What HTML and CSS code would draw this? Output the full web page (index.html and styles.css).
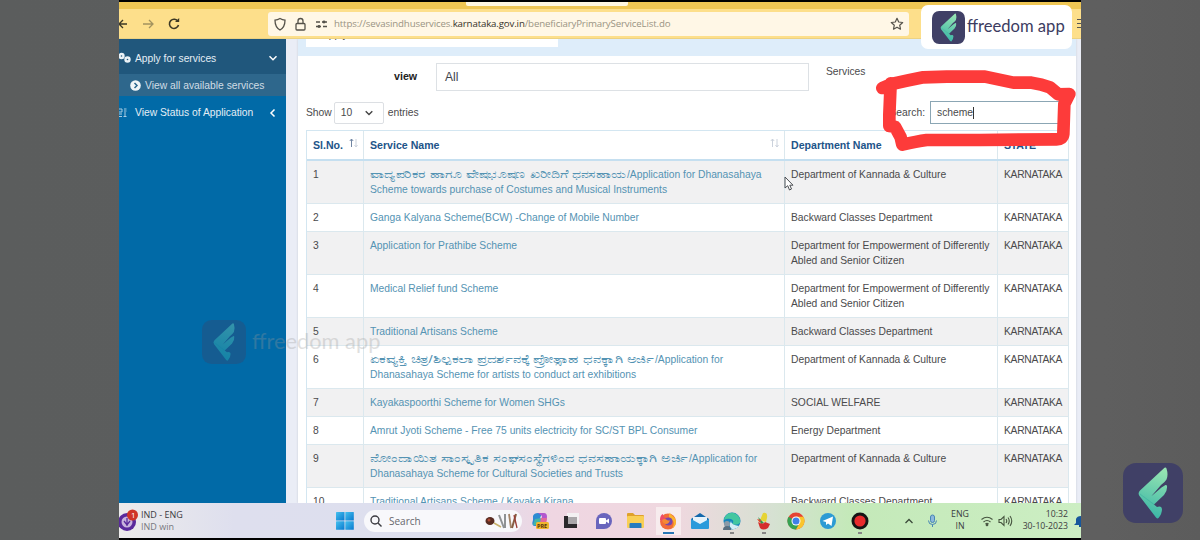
FILE: index.html
```html
<!DOCTYPE html>
<html lang="en">
<head>
<meta charset="utf-8">
<title>Seva Sindhu services</title>
<link rel="stylesheet" href="styles.css">
</head>
<body>
<svg width="0" height="0" class="defs">
  <defs>
    <linearGradient id="wing" x1="0.6" y1="0" x2="0.4" y2="1"><stop offset="0" stop-color="#96e4b2"/><stop offset="1" stop-color="#38b5a6"/></linearGradient>
    <linearGradient id="winblue" x1="0" y1="0" x2="1" y2="1"><stop offset="0" stop-color="#45c1ef"/><stop offset="1" stop-color="#0879cf"/></linearGradient>
    <symbol id="logo" viewBox="0 0 60 60">
      <rect width="60" height="60" rx="13" fill="#404066"/>
      <path fill="url(#wing)" d="M41.500 4.800Q43 4 43.500 5.500Q45.500 12 43.500 16.500Q42 19 38 22L28.300 33.300L38.500 24.500L42.500 22Q43.700 21.700 44 23Q44.500 28 41 32L31 41.500L34 44Q38.500 42.500 39 46Q39 51 35.500 55Q34.500 56 33 54.500L16.500 33Q14.500 30 17 27.500Z"/>
      <path d="M17 31l14 10.500" stroke="#2da49c" stroke-width=".8" opacity=".5"/>
    </symbol>
  </defs>
</svg>
<div class="stage">
  <div class="tabstrip"><i class="active-tab"></i></div>
  <div class="toolbar">
    <svg class="nav-icons" width="70" height="29" viewBox="0 0 70 29" fill="none" stroke="#3c3825" stroke-width="1.3">
      <path d="M0 15h8M4 11l-4 4 4 4"/>
      <path stroke="#a3935f" d="M24 15h10M30 11l4 4-4 4"/>
      <path stroke-width="1.6" d="M59 12.500a4.600 4.600 0 1 0 .5 3.500"/><path d="M56 13h4.200V9z" fill="#3c3825" stroke="none"/>
    </svg>
    <div class="address">
      <svg width="66" height="22" viewBox="0 0 66 22" fill="none" stroke="#55524a" stroke-width="1.300">
        <path d="M12 5.500c2 1.200 3 1.500 5 1.700 0 5-1.500 7.800-5 9.800-3.500-2-5-4.800-5-9.800 2-.2 3-.5 5-1.700z"/>
        <rect x="28" y="10.500" width="9" height="6.500" rx="1"/><path d="M30 10.500V8a2.500 2.500 0 0 1 5 0v2.500"/>
        <path d="M48 9h4M54 9h5M48 13.500h5M55 13.500h4"/><circle cx="56" cy="9" r=".8"/><circle cx="51" cy="13.500" r=".8"/>
      </svg>
      <span class="url">https://sevasindhuservices.<b>karnataka.gov.in</b>/beneficiaryPrimaryServiceList.do</span>
      <svg class="star" width="14" height="14" viewBox="0 0 14 14" fill="none" stroke="#55524a" stroke-width="1.200"><path d="M7 1.300l1.700 3.700 4 .5-3 2.700.8 4L7 10.200l-3.500 2 .8-4-3-2.700 4-.5z" stroke-linejoin="round"/></svg>
    </div>
    <i class="burger"></i>
  </div>

  <div class="page">
    <nav class="sidebar">
      <div class="item open">
        <svg width="14" height="12" viewBox="0 0 14 12" fill="none" stroke="#eaf2f7"><circle cx="2.500" cy="4" r="2" stroke-width="2.400"/><circle cx="8.500" cy="7.500" r="2" stroke-width="2.400"/></svg>
        <span class="t-apply">Apply for services</span>
        <svg class="chev" width="8" height="8" viewBox="0 0 8 8" fill="none" stroke="#fff" stroke-width="1.500"><path d="M.5 2.200L4 5.700l3.500-3.500"/></svg>
      </div>
      <div class="item sub">
        <svg width="11" height="11" viewBox="0 0 11 11"><circle cx="5.500" cy="5.500" r="5.300" fill="#f1f5f8"/><path d="M4.500 3l2.500 2.500L4.500 8" fill="none" stroke="#2d688e" stroke-width="1.500"/></svg>
        <span>View all available services</span>
      </div>
      <div class="item">
        <svg width="8" height="10" viewBox="0 0 8 10" fill="none" stroke="#aacde2" stroke-width="1"><path d="M0 1h3v3H0M0 6h3M0 8.500h3M5 1h2.500M5 3h2.500M6 4v5M4.500 8.500h3"/></svg>
        <span>View Status of Application</span>
        <svg class="chev" width="8" height="8" viewBox="0 0 8 8" fill="none" stroke="#fff" stroke-width="1.500"><path d="M5.500 .5L2 4l3.500 3.500"/></svg>
      </div>
    </nav>
    <main class="panel">
      <div class="band"><div class="tab"><span>Apply</span></div></div>
      <div class="filter">
        <b>view</b><div class="select-all">All</div><span class="services">Services</span>
      </div>
      <div class="controls">
        <span>Show</span>
        <div class="length">10<svg width="8" height="8" viewBox="0 0 8 8" fill="none" stroke="#444" stroke-width="1.400"><path d="M.7 2.300L4 5.500l3.300-3.200"/></svg></div>
        <span>entries</span>
        <span class="search-label">Search:</span><div class="search">scheme<i></i></div>
      </div>
      <div class="grid">
        <div class="row head"><div>Sl.No. <svg class="sort" width="9" height="10" viewBox="0 0 9 10" fill="none" stroke="#cbd2dc"><path stroke="#7186a3" d="M2.500 9V1M.8 3l1.700-2 1.700 2"/><path d="M7 1v8M5.500 7L7 9l1.500-2"/></svg></div><div>Service Name <svg class="sort" width="9" height="10" viewBox="0 0 9 10" fill="none" stroke="#cbd2dc"><path d="M2.500 9V1M.8 3l1.700-2 1.700 2M7 1v8M5.500 7L7 9l1.500-2"/></svg></div><div>Department Name</div><div>STATE</div></div>
        <div class="row two odd"><div>1</div><div><a><span class="kn k1">ವಾದ್ಯಪರಿಕರ ಹಾಗೂ ವೇಷಭೂಷಣ ಖರೀದಿಗೆ ಧನಸಹಾಯ</span>/Application for Dhanasahaya<br>Scheme towards purchase of Costumes and Musical Instruments</a></div><div>Department of Kannada &amp; Culture</div><div>KARNATAKA</div></div>
        <div class="row"><div>2</div><div><a>Ganga Kalyana Scheme(BCW) -Change of Mobile Number</a></div><div>Backward Classes Department</div><div>KARNATAKA</div></div>
        <div class="row two odd"><div>3</div><div><a>Application for Prathibe Scheme</a></div><div>Department for Empowerment of Differently<br>Abled and Senior Citizen</div><div>KARNATAKA</div></div>
        <div class="row two"><div>4</div><div><a>Medical Relief fund Scheme</a></div><div>Department for Empowerment of Differently<br>Abled and Senior Citizen</div><div>KARNATAKA</div></div>
        <div class="row odd"><div>5</div><div><a>Traditional Artisans Scheme</a></div><div>Backward Classes Department</div><div>KARNATAKA</div></div>
        <div class="row two"><div>6</div><div><a><span class="kn k6">ಏಕವ್ಯಕ್ತಿ ಚಿತ್ರ/ಶಿಲ್ಪಕಲಾ ಪ್ರದರ್ಶನಕ್ಕೆ ಪ್ರೋತ್ಸಾಹ ಧನಕ್ಕಾಗಿ ಅರ್ಜಿ</span>/Application for<br>Dhanasahaya Scheme for artists to conduct art exhibitions</a></div><div>Department of Kannada &amp; Culture</div><div>KARNATAKA</div></div>
        <div class="row odd"><div>7</div><div><a>Kayakaspoorthi Scheme for Women SHGs</a></div><div>SOCIAL WELFARE</div><div>KARNATAKA</div></div>
        <div class="row"><div>8</div><div><a>Amrut Jyoti Scheme - Free 75 units electricity for SC/ST BPL Consumer</a></div><div>Energy Department</div><div>KARNATAKA</div></div>
        <div class="row two odd"><div>9</div><div><a><span class="kn k9">ನೋಂದಾಯಿತ ಸಾಂಸ್ಕೃತಿಕ ಸಂಘಸಂಸ್ಥೆಗಳಿಂದ ಧನಸಹಾಯಕ್ಕಾಗಿ ಅರ್ಜಿ</span>/Application for<br>Dhanasahaya Scheme for Cultural Societies and Trusts</a></div><div>Department of Kannada &amp; Culture</div><div>KARNATAKA</div></div>
        <div class="row"><div>10</div><div><a>Traditional Artisans Scheme / Kayaka Kirana</a></div><div>Backward Classes Department</div><div>KARNATAKA</div></div>
      </div>
    </main>
  </div>

  <footer class="taskbar">
    <svg width="19" height="24" viewBox="0 0 19 24"><circle cx="8" cy="13" r="9" fill="#5a2a9c"/><circle cx="8" cy="13" r="5.500" fill="#c9b4dd"/><path d="M8 9v8M5 12l3 4 3-4" stroke="#5a2a9c" stroke-width="1.300" fill="none"/><circle cx="13.500" cy="6" r="5.500" fill="#cf3427"/><text x="12" y="9" font-size="8" font-family="Open Sans, sans-serif" fill="#fff">1</text></svg>
    <div class="lang"><span>IND - ENG</span><span class="dim">IND win</span></div>
    <svg class="start" width="18" height="18" viewBox="0 0 18 18" fill="url(#winblue)"><rect width="8.500" height="8.500" rx=".5"/><rect x="9.300" width="8.500" height="8.500" rx=".5"/><rect y="9.300" width="8.500" height="8.500" rx=".5"/><rect x="9.300" y="9.300" width="8.500" height="8.500" rx=".5"/></svg>
    <div class="pill">
      <svg width="12" height="12" viewBox="0 0 12 12" fill="none" stroke="#3c3c42" stroke-width="1.400"><circle cx="5" cy="5" r="4"/><path d="M8 8l3.500 3.500"/></svg>
      <span>Search</span>
      <svg class="tools" width="34" height="18" viewBox="0 0 34 18" fill="none"><ellipse cx="5" cy="9" rx="4.500" ry="4" fill="#582c22"/><circle cx="4" cy="8" r="1.500" fill="#b04b35"/><path d="M9 11l7 4" stroke="#c7b06a" stroke-width="1.500"/><path d="M14 3l5 13M20 2v14" stroke="#8f9294" stroke-width="2"/><path d="M24 2l2 14" stroke="#a38467" stroke-width="1.800"/><path d="M31 2l-4 14" stroke="#855e43" stroke-width="2"/><path d="M29 3l3 13" stroke="#9b3d35" stroke-width="1.300"/></svg>
    </div>
    <div class="apps">
      <div><svg viewBox="0 0 20 20"><path d="M3 5q1-3 5-3h4l-5 13H5Q1 15 3 9z" fill="#2d8bd2"/><path d="M8 2h6q3 0 3 4l-1 6h-5l1-7z" fill="#b257ce"/><path d="M5 8l7-1-2 7H3z" fill="#43b5a5"/><path d="M11 7h6l-1 5h-6z" fill="#e3699a"/><rect x="6" y="11" width="13" height="7" rx="1.500" fill="#f0b72e"/><text x="7" y="17" font-size="5.500" font-weight="700" font-family="Open Sans, sans-serif" fill="#54350e">PRE</text></svg></div>
      <div><svg viewBox="0 0 20 20"><rect x="5" y="2" width="12" height="11" fill="#f3f0f2"/><path d="M2 5h4v8h9v4H2z" fill="#2b292c"/><rect x="6" y="6" width="9" height="7" fill="#aaa7aa"/></svg></div>
      <div><svg viewBox="0 0 20 20"><path d="M2 18V10a8 8 0 1 1 8 8z" fill="#6965bd"/><rect x="5" y="7" width="7" height="6" rx="1" fill="#fff"/><path d="M12 9.500l3-2v5l-3-2z" fill="#fff"/></svg></div>
      <div><svg viewBox="0 0 20 20"><path d="M1 3q0-1 1-1h5l2 2h8q1 0 1 1v5H1z" fill="#dfa12c"/><rect x="1" y="5" width="17" height="12" rx="1" fill="#f9cf55"/><path d="M3.500 17v-4q0-1 1-1h10q1 0 1 1v4z" fill="#267bc0"/></svg></div>
      <div class="focus"><svg viewBox="0 0 20 20"><circle cx="10" cy="10.500" r="8" fill="#f26b3a"/><path d="M12 1.500c0 3 6 4 6 9a8 8 0 0 1-4 7c3-5 2-8-2-10-2-2-1-4 0-6z" fill="#fbb32d"/><path d="M2 9Q2 4 5 3q0 3 3 4l-2 4z" fill="#ee4b68"/><circle cx="10.500" cy="10.500" r="4" fill="#7749ac"/><path d="M4 9q3-2 5 0 2 1 3 0-1 4-4 4-3 0-4-4z" fill="#f68a32"/></svg></div>
      <div><svg viewBox="0 0 20 20"><path d="M1 8l9-6 9 6v9H1z" fill="#1468ac"/><path d="M3 6h14v7H3z" fill="#e5f2fb"/><path d="M1 8l9 5 9-5v9q0 1-1 1H2q-1 0-1-1z" fill="#2b9adb"/></svg></div>
      <div class="run"><svg viewBox="0 0 20 20"><circle cx="10" cy="10" r="8.500" fill="#1686bd"/><path d="M2 9C3 3 9 0 14 3q5 3 4 9-3 3-8 1 3-3-1-5-4-1-7 1z" fill="#43c7a0"/><path d="M9 10q0 4 8 5-3 4-7 3-4-2-1-8z" fill="#d5eef5"/><circle cx="5" cy="13" r="3" fill="#8a9ba8"/><path d="M1 19q0-4 4-4t4 4z" fill="#596f80"/></svg></div>
      <div class="run"><svg viewBox="0 0 20 20"><path d="M9 2q5-1 4 5l-1 4-6-2z" fill="#e6d434"/><path d="M4 6l6 6-3 1z" fill="#31984b"/><path d="M4 11q5 3 7 0l5 2-2 4q-5 3-8 0z" fill="#d52e2d"/><path d="M3 8l4 1-1 3z" fill="#e04a2d"/></svg></div>
      <div><svg viewBox="0 0 20 20"><circle cx="10" cy="10" r="8.500" fill="#e54334"/><path d="M10 10L2.600 5.700A8.500 8.500 0 0 0 10 18.500l3.500-6z" fill="#35a353"/><path d="M10 10h0l3.700 2-3.700 6.500a8.500 8.500 0 0 0 7.400-12.700H10z" fill="#fac52c"/><circle cx="10" cy="10" r="4.500" fill="#fff"/><circle cx="10" cy="10" r="3.500" fill="#4080e8"/></svg></div>
      <div><svg viewBox="0 0 20 20"><circle cx="10" cy="10" r="8" fill="#2c9bd4"/><path d="M4.500 10L15 5.500 13.500 15l-3.500-2.500L8 14v-3z" fill="#fff"/></svg></div>
      <div class="run"><svg viewBox="0 0 20 20"><circle cx="10" cy="10" r="8.500" fill="#151515"/><circle cx="10" cy="10" r="5.600" fill="#e82b2c"/></svg></div>
    </div>
    <svg class="tray1" width="40" height="20" viewBox="0 0 40 20" fill="none" stroke="#3b4a3a" stroke-width="1.300"><path d="M5.500 12L9 8.500l3.500 3.500"/><rect x="30.500" y="4" width="4" height="7.500" rx="2" fill="#8cb8dc" stroke="#4785b5" stroke-width="1"/><path d="M28.500 9.500q0 4 4 4t4-4M32.500 13.500V16" stroke="#4785b5" stroke-width="1"/></svg>
    <div class="eng"><span>ENG</span><span>IN</span></div>
    <svg class="tray2" width="34" height="16" viewBox="0 0 34 16" fill="none" stroke="#46543f" stroke-width="1.100"><path d="M1.500 6.500q5.500-4.500 11 0M3.500 9q3.500-3 7 0M5.500 11q1.500-1.500 3 0"/><circle cx="7" cy="12" r=".8"/><path d="M19 6.500h2l3-3v9l-3-3h-2zM26 6q1.500 2 0 4M28 4.500q2.500 3.500 0 7M30 3q3.500 5 0 10"/></svg>
    <div class="clock"><span>10:32</span><span>30-10-2023</span></div>
    <svg class="bell" width="7" height="14" viewBox="0 0 7 14"><path d="M0 11l2-2V5q1-3 5-3v11H5v-2z" fill="#17579c"/></svg>
  </footer>

  <svg class="cursor" width="10" height="15" viewBox="0 0 10 15"><path d="M1 1v11l2.700-2.300L5.500 14l2-1-1.700-3.800H9z" fill="#fff" stroke="#4b4e53"/></svg>
  <svg class="scribble" width="420" height="200" viewBox="0 0 1260 600" fill="none" stroke="#fd3b3a" stroke-width="38" stroke-linecap="round" stroke-linejoin="round">
    <path d="M307 264L335 252Q380 242 430 232L500 230H615L700 248H755Q785 252 810 262L835 283L868 282L853 312L850 402Q848 418 830 418L600 420H440Q410 424 367 434L362 412L345 380L328 378V345L332 250"/>
  </svg>
  <div class="brand"><svg width="33" height="33"><use href="#logo"/></svg><span>ffreedom app</span></div>
  <div class="watermark"><svg width="44" height="44"><use href="#logo"/></svg><span>ffreedom app</span></div>
</div>
<svg class="corner" width="60" height="60"><use href="#logo"/></svg>
</body>
</html>
```
FILE: styles.css
```css
* { box-sizing: border-box; }
body { margin: 0; width: 1200px; height: 540px; overflow: hidden; position: relative; background: linear-gradient(90deg, #5b5d5d, #5c5e5e 50%, #5f5f5f 92%, #5c5c5c); font-family: "Liberation Sans", Arial, sans-serif; color: #4a4a4c; font-size: 10.3px; }
.defs { position: absolute; }
.stage { position: relative; width: 962px; height: 540px; margin-left: 119px; background: #000; padding: 2px 0; display: flex; flex-direction: column; overflow: hidden; }
.tabstrip { height: 7px; flex: none; background: #efc654; padding-left: 347px; }
.active-tab { display: block; width: 162px; height: 4px; background: #fff7e0; border-radius: 0 0 2px 2px; }
.toolbar { height: 30px; flex: none; background: #fddf8b; border-bottom: 1px solid #ecd283; display: flex; align-items: center; }
.nav-icons { flex: none; }
.address { width: 642px; height: 24px; margin-left: 79px; background: #fff7e6; border-radius: 3px; display: flex; align-items: center; }
.url { font-family: "Open Sans", sans-serif; font-size: 9.7px; color: #9a9484; white-space: nowrap; letter-spacing: -0.15px; }
.url b { font-weight: 400; color: #35322a; }
.star { margin-left: auto; margin-right: 5px; }
.burger { margin-left: 168px; width: 4px; height: 9px; border-top: 1px solid #555; border-bottom: 1px solid #555; background: linear-gradient(#555, #555) 0 3px / 4px 1px no-repeat; }
.page { height: 464px; flex: none; display: flex; background: #eaedf6; overflow: hidden; }
.sidebar { width: 167px; flex: none; background: #016aa7; color: #e4eef5; margin-right: 12px; }
.item { height: 28px; display: flex; align-items: center; white-space: nowrap; padding-right: 9px; }
.item svg { flex: none; }
.item span { margin-left: 2px; }
.item.open { height: 35px; background: #20577c; padding-top: 3px; }
.item.sub { height: 22px; background: #2e678c; padding-left: 11px; color: #d0dde6; }
.item.sub span { margin-left: 4px; }
.item:last-child { height: 33px; }
.item:last-child span { margin-left: 8px; }
.item .chev { margin-left: auto; }
.panel { width: 778px; flex: none; background: #fff; box-shadow: 0 0 2px #c5c9d4; }
.band { height: 17px; background: #deedfa; padding-left: 8px; }
.tab { width: 252px; height: 8px; background: #fff; overflow: hidden; padding-left: 16px; }
.tab span { display: block; margin-top: -10px; line-height: 12px; }
.filter { height: 42px; display: flex; padding: 7px 0 0 96px; }
.filter b { width: 42px; line-height: 27px; color: #222; font-size: 10.700px; }
.select-all { width: 373px; height: 28px; border: 1px solid #dde1e5; padding-left: 8px; line-height: 27px; font-size: 12px; color: #3d434b; }
.services { margin-left: 17px; line-height: 17px; }
.controls { height: 24px; display: flex; align-items: center; padding: 5px 0 0 8px; white-space: nowrap; }
.length { width: 50px; height: 22px; margin: 0 4px 0 2px; border: 1px solid #dcdfe3; border-radius: 2px; display: flex; align-items: center; justify-content: space-between; padding: 0 10px 0 6px; }
.search-label { margin-left: auto; }
.search { width: 138px; height: 23px; border: 1px solid #8ba6b4; margin: 0 8px 0 5px; padding-left: 6px; display: flex; align-items: center; }
.search i { width: 1px; height: 12px; background: #333; }
.grid { width: 763px; margin: 8px 0 0 8px; border: 1px solid #d3e6f1; border-bottom: 0; border-right: 0; }
.row { height: 28px; display: grid; grid-template-columns: 57px 421px 213px 71px; line-height: 15px; border-bottom: 1px solid #dbe8ee; white-space: nowrap; }
.row > div { padding: 6px 0 0 6px; border-right: 1px solid #dbe8ee; overflow: hidden; }
.row > div:last-child { letter-spacing: -0.3px; }
.row.two { height: 43px; }
.row.odd { background: #f1f1f2; }
.row a { color: #5493b3; }
.row.head { height: 30px; font-weight: 700; font-size: 10.600px; color: #1d5489; border-bottom: 2px solid #c5dff0; }
.row.head > div { padding-top: 7px; }
.sort { float: right; margin: 0 5px 0 0; }
.kn { display: inline-block; height: 15px; line-height: 15px; vertical-align: top; font-size: 11px; transform-origin: 0 0; }
.k1 { width: 201px; margin-right: 56px; transform: scaleX(1.275); }
.k6 { width: 210px; margin-right: 75px; transform: scaleX(1.357); }
.k9 { width: 239px; margin-right: 80px; transform: scaleX(1.335); }
.taskbar { height: 35px; flex: none; display: flex; align-items: center; font-family: "Open Sans", sans-serif; font-size: 9px; color: #3b3b40; background: linear-gradient(90deg, #ecebeb 0, #dedfee 12%, #dddfee 35%, #efd6e2 45%, #efd8df 58%, #d6e1d2 68%, #c4e9b9 76%, #cceec3 100%); }
.taskbar > * { flex: none; }
.lang { display: flex; flex-direction: column; width: 60px; margin-left: 3px; line-height: 11.5px; white-space: nowrap; }
.dim { color: #77777d; }
.start { margin-left: 135px; }
.pill { margin-left: 10px; width: 158px; height: 22px; border-radius: 11px; background: #f8f8fb; display: flex; align-items: center; padding-left: 6px; font-size: 10px; color: #66666c; }
.pill span { margin-left: 7px; }
.tools { margin-left: auto; margin-right: 3px; }
.apps { display: flex; margin-left: 2px; }
.apps > div { width: 32px; height: 35px; display: flex; align-items: center; justify-content: center; background: no-repeat center 30px / 4px 2px; }
.apps svg { width: 20px; height: 20px; }
.apps .focus { background: linear-gradient(#2876b5, #2876b5) no-repeat center 29px / 11px 2px, linear-gradient(#f7ecee, #f7ecee) no-repeat center 4px / 25px 28px; }
.apps .run { background-image: linear-gradient(#868686, #868686); background-position: center 29px; }
.tray1 { margin-left: 24px; }
.eng { display: flex; flex-direction: column; align-items: center; width: 24px; margin-left: 8px; line-height: 11.500px; font-size: 8.800px; }
.tray2 { margin-left: 8px; }
.clock { display: flex; flex-direction: column; align-items: flex-end; width: 51px; margin-left: auto; line-height: 11.500px; font-size: 8.700px; white-space: nowrap; }
.bell { margin-left: 6px; }
.cursor { position: absolute; left: 665px; top: 176px; }
.scribble { position: absolute; left: 661px; top: 0; }
.brand { position: absolute; left: 802px; top: 5px; width: 151px; height: 44px; background: #fff; border-radius: 7px; display: flex; align-items: center; padding-left: 11px; font-family: Lato, sans-serif; color: #3c3c61; font-size: 16.600px; white-space: nowrap; }
.brand span { margin: -3px 0 0 2px; }
.watermark { position: absolute; left: 83px; top: 320px; display: flex; align-items: center; font-family: Lato, sans-serif; font-size: 21.800px; color: #999; white-space: nowrap; }
.watermark svg { opacity: .33; }
.watermark span { margin: -4px 0 0 6px; opacity: .3; }
.corner { position: absolute; left: 1123px; top: 463px; }
```
